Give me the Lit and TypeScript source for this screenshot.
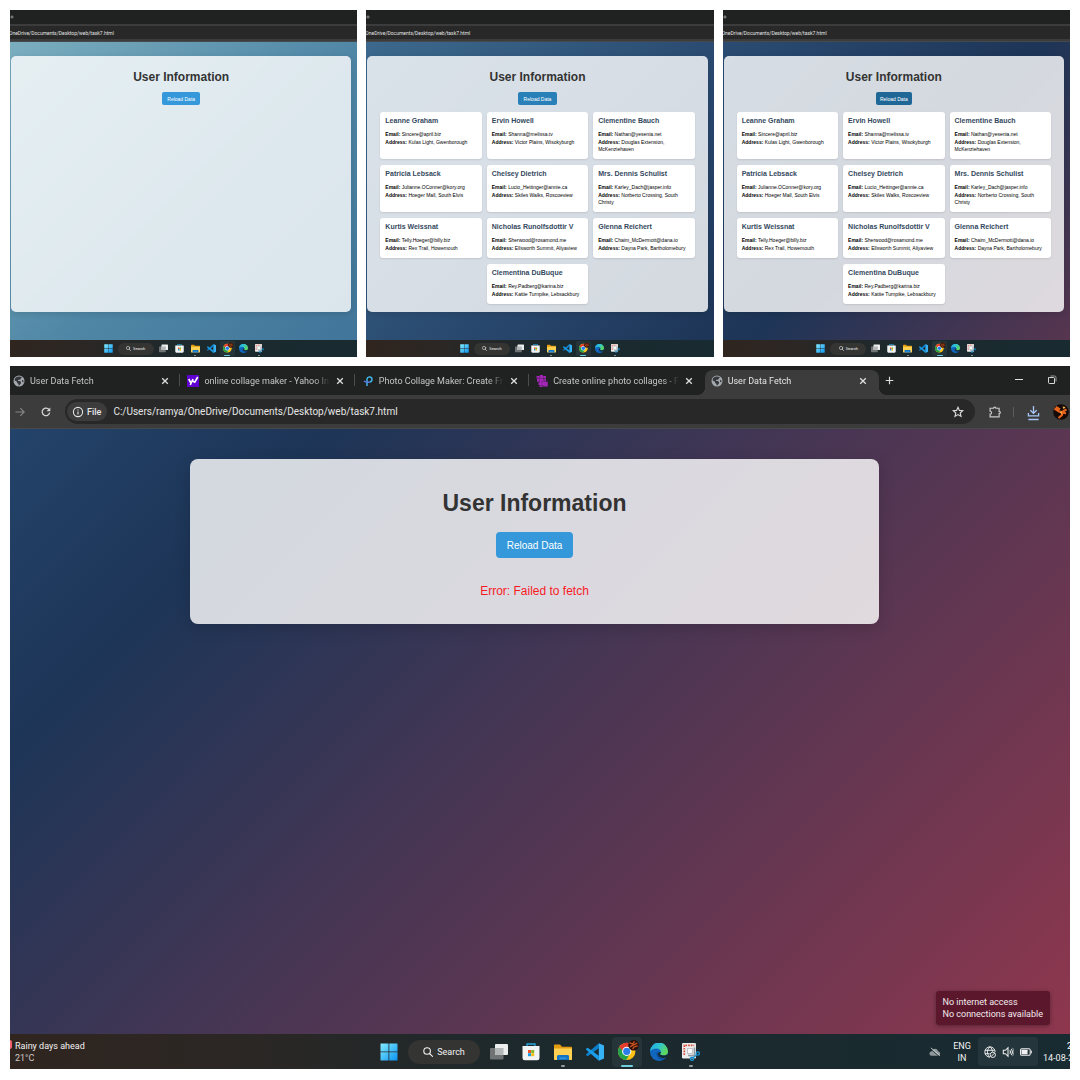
import { LitElement, html, css, svg, nothing } from "lit";
import { customElement, property } from "lit/decorators.js";
import { classMap } from "lit/directives/class-map.js";

interface User {
  name: string;
  email: string;
  address: string;
}

const USERS: User[] = [
  { name: "Leanne Graham", email: "Sincere@april.biz", address: "Kulas Light, Gwenborough" },
  { name: "Ervin Howell", email: "Shanna@melissa.tv", address: "Victor Plains, Wisokyburgh" },
  { name: "Clementine Bauch", email: "Nathan@yesenia.net", address: "Douglas Extension, McKenziehaven" },
  { name: "Patricia Lebsack", email: "Julianne.OConner@kory.org", address: "Hoeger Mall, South Elvis" },
  { name: "Chelsey Dietrich", email: "Lucio_Hettinger@annie.ca", address: "Skiles Walks, Roscoeview" },
  { name: "Mrs. Dennis Schulist", email: "Karley_Dach@jasper.info", address: "Norberto Crossing, South Christy" },
  { name: "Kurtis Weissnat", email: "Telly.Hoeger@billy.biz", address: "Rex Trail, Howemouth" },
  { name: "Nicholas Runolfsdottir V", email: "Sherwood@rosamond.me", address: "Ellsworth Summit, Aliyaview" },
  { name: "Glenna Reichert", email: "Chaim_McDermott@dana.io", address: "Dayna Park, Bartholomebury" },
  { name: "Clementina DuBuque", email: "Rey.Padberg@karina.biz", address: "Kattie Turnpike, Lebsackbury" },
];

/* ---------- icons ---------- */

const closeIcon = svg`<svg viewBox="0 0 10 10" fill="none" stroke="#dedede" stroke-width="1.3"><path d="M2.2 2.2l5.6 5.6M7.8 2.2L2.2 7.8"/></svg>`;

const globeIcon = svg`<svg viewBox="0 0 24 24"><circle cx="12" cy="12" r="11" fill="#a4a9ae"/><path fill="#35383a" d="M12 3c2.500 0 4.500.8 6 2.200L15.500 7l-1 2.500H11L9.500 12h4l2.500 2v2.500l-3 4-2 .5v-3l-3-2.500v-2L3 10.500A9 9 0 0 1 12 3zM18.500 9.500L21 11l-.4 4-2.600-1.500z"/></svg>`;

const yahooIcon = svg`<svg viewBox="0 0 24 24"><rect width="24" height="24" rx="1" fill="#5f01d1"/><path fill="none" stroke="#fff" stroke-width="3.200" d="M3.500 8l4 7.500M12 8L6.500 20M11.500 12l4 2.500L21.500 4"/></svg>`;

const ribbonIcon = svg`<svg viewBox="0 0 24 24" fill="none" stroke-width="3"><path stroke="#3fb2e6" d="M10 22V8a5 5 0 1 1 5 6"/><path stroke="#5b7be8" d="M4 12c3 2.500 8 2.800 11.500 2"/></svg>`;

const mosaicIcon = svg`<svg viewBox="0 0 24 24" fill="#a126b4"><path d="M1 2h6v5H1zM7.500 0H14v7.500H7.500zM14.500 2H20v5h-5.500zM2 7.500h5v6H2zM7.500 8H15v7H7.500zM15.500 8H20v5h-4.500zM5 14.500h9V20H5zM14 13.500h9.500V23H14zM7 20.500h6V24H7z"/><path fill="#5d1b6e" d="M16 10h2v2h-2zM3 5h2v2H3zM11 13h2v2h-2z"/></svg>`;

const windowsIcon = svg`<svg viewBox="0 0 18 18"><defs><linearGradient id="win" x1="0" y1="0" x2="1" y2="1"><stop offset="0" stop-color="#84ecff"/><stop offset="1" stop-color="#0a93f2"/></linearGradient></defs><path fill="url(#win)" d="M.8.5h7.700v8H.5V.8zM9.300.5H17l.5.3v7.700H9.300zM.5 9.300h8v8.200H.8l-.3-.3zM9.300 9.300h8.200v7.900l-.3.3H9.300z"/></svg>`;

const searchIcon = svg`<svg viewBox="0 0 10 10" fill="none" stroke="#f2f2f2" stroke-width="1.1" stroke-linecap="round"><circle cx="4.100" cy="4" r="3.300"/><path d="M6.500 6.500L9.500 9.400"/></svg>`;

const taskViewIcon = svg`<svg viewBox="0 0 18 18"><rect y="5" width="13.500" height="11.500" rx="1" fill="#6f7374"/><rect x="5" y="1" width="13" height="11" rx="1" fill="#eceded"/><path fill="#b4b7b8" d="M5 5h8.500v7H6l-1-1z"/></svg>`;

const storeIcon = svg`<svg viewBox="0 0 18 18"><path d="M5 4V1h8v3" fill="none" stroke="#27a7e0" stroke-width="1.300"/><path fill="#f1f3f5" d="M.5 3h17v12a2.300 2.300 0 0 1-2.300 2.300H2.800A2.300 2.300 0 0 1 .5 15z"/><path fill="#f2522b" d="M6 7h3v3H6z"/><path fill="#81b927" d="M9.200 7h3v3h-3z"/><path fill="#169fe6" d="M6 10.200h3v3H6z"/><path fill="#fbb90d" d="M9.200 10.200h3v3h-3z"/></svg>`;

const explorerIcon = svg`<svg viewBox="0 0 18 18"><path fill="#e39b12" d="M0 2.500c0-.6.400-1 1-1h5l2 2.200H17c.6 0 1 .4 1 1V8H0z"/><path fill="#ffd152" d="M0 5.500h18V16c0 .6-.4 1-1 1H1c-.6 0-1-.4-1-1z"/><path fill="#1474c4" d="M3 17v-3.500c0-1 .7-1.500 1.500-1.500h9c.8 0 1.500.5 1.500 1.500V17z"/><path fill="#3296dd" d="M5.500 14.500h7V16h-7z"/></svg>`;

const vscodeIcon = svg`<svg viewBox="0 0 18 18"><path fill="#0b7fcc" d="M12.800.2v5L1.700 13.300 0 12V11.300z"/><path fill="#1b9de9" d="M0 5.700l1.700-1L12.800 12.800v5L0 6.500z"/><path fill="#36b2f7" d="M12.800.2L18 2.600v12.800l-5.200 2.400z"/></svg>`;

const chromeIcon = svg`<svg viewBox="0 0 24 22"><circle cx="9.500" cy="12.500" r="9.500" fill="#fbc116"/><path fill="#e33b2e" d="M1.300 7.800A9.500 9.500 0 0 1 17.700 7.800H9.500L6 14z"/><path fill="#22a34a" d="M1.300 7.800a9.500 9.500 0 0 0 7.700 14.200L13.500 14l-7-.5z"/><circle cx="9.500" cy="12.500" r="5" fill="#fff"/><circle cx="9.500" cy="12.500" r="3.900" fill="#2b7de9"/><circle cx="17" cy="5.800" r="5.800" fill="#2a0f08"/><path fill="none" stroke="#c4521f" stroke-width="1.500" d="M12.500 3l3.500 1.500 2-3M13 7.500l3-1.500 5-2.500M16 10l1.500-2.500L21.500 6.500"/></svg>`;

const edgeIcon = svg`<svg viewBox="0 0 18 18"><defs><linearGradient id="edge" x1="0" y1="0" x2="1" y2=".5"><stop offset="0" stop-color="#1fa2e0"/><stop offset=".5" stop-color="#2fc5d3"/><stop offset="1" stop-color="#5fd95a"/></linearGradient></defs><circle cx="9" cy="9" r="9" fill="#1167bd"/><path fill="url(#edge)" d="M0 8.500A9 9 0 0 1 18 8.500c0 3-2.500 4-4.500 4-2.200 0-3.500-.7-3.500-1.400 0-.6.900-.9.900-2.300C10.900 7 9 5.500 6.500 5.500 3.500 5.500.8 7 0 8.500z"/><path fill="#0c4f9e" d="M6.500 9.500c-.8 3.500 2 7 5.500 7 1.800 0 3.300-.8 4.300-1.900-3.500 1.400-7.500.2-8.300-3.100-.2-1 .2-2.200.8-2.900z"/><path fill="#15282e" d="M10.900 9c0 1-.9 1.500-.9 2.100 0 .7 1.300 1.400 3.500 1.400 1.500 0 3-.5 3.800-1.500L17.300 13l-1 1.500c-3.800 1-7.800 0-8.300-3-.2-1.500.8-2.800 2.900-2.500z"/></svg>`;

const snipIcon = svg`<svg viewBox="0 0 18 18"><rect x="0" y="0" width="14" height="15.500" rx="1.300" fill="#eceded"/><path fill="none" stroke="#d84f3d" stroke-width="1.700" stroke-dasharray="1.700 1" d="M2.300 12V2.300h10"/><path fill="#bfc5c9" d="M5 5h6v6H5z"/><path fill="#fafafa" d="M6 6h4v4H6z"/><path stroke="#8f9aa2" stroke-width="1.600" d="M12.500 4.500v9M6 12.500h7"/><g fill="none" stroke="#168fd0" stroke-width="1.400"><circle cx="15.800" cy="10.500" r="1.600"/><circle cx="10" cy="15.800" r="1.600"/><path d="M14.500 12L11.300 14.700"/></g></svg>`;

const cloudIcon = svg`<svg viewBox="0 0 14 12"><path fill="#8d9699" d="M3 10.500a2.600 2.600 0 0 1-.2-5.200 4.200 4.200 0 0 1 8-.3 2.800 2.800 0 0 1 .2 5.500z"/><path stroke="#182a30" stroke-width="1" d="M1.200 2l11 9.500"/><path stroke="#d3d8da" stroke-width="1" d="M2 1l11 9.500"/></svg>`;

const networkIcon = svg`<svg viewBox="0 0 14 14" fill="none" stroke="#f1f1f1" stroke-width="1.100"><path d="M7 13A6 6 0 1 1 13 7M1 5h11.500M1 9h5.500M7 1C4.500 3 4 6 4 7s.5 4 2.500 6M7 1c1.800 1.400 2.700 3.500 2.900 5.500"/><circle cx="10.300" cy="10.300" r="3.100"/><path d="M8.200 12.400l4.200-4.200"/></svg>`;

const soundIcon = svg`<svg viewBox="0 0 14 14" fill="none" stroke="#f1f1f1" stroke-width="1.200"><path d="M1.500 5v4H4l3 3V2L4 5z"/><path d="M9 5c.9 1 .9 3 0 4M10.600 3.500c1.800 2 1.800 5 0 7" /><path stroke="#7f8b8f" d="M12.200 2.200c2 3 2 6.600 0 9.600"/></svg>`;

const batteryIcon = svg`<svg viewBox="0 0 14 14"><rect x=".6" y="3.200" width="11.300" height="7.600" rx="1.600" fill="none" stroke="#f1f1f1" stroke-width="1.200"/><rect x="1.800" y="4.400" width="7" height="5.200" rx=".6" fill="#f1f1f1"/><path fill="#f1f1f1" d="M12.700 5.300h.6c.7 0 .7 3.400 0 3.400h-.6z"/></svg>`;

const forwardIcon = svg`<svg viewBox="0 0 12 12" fill="none" stroke="#868686" stroke-width="1.200"><path d="M1.500 6h8.500M6.300 2.200L10.100 6l-3.800 3.800"/></svg>`;

const reloadIcon = svg`<svg viewBox="0 0 12 12" fill="none" stroke="#d4d4d4" stroke-width="1.300"><path d="M9.300 4A3.800 3.800 0 1 0 9.700 6.700"/><path fill="#d4d4d4" stroke="none" d="M10.300 1.500v3.800H6.500z"/></svg>`;

const infoIcon = svg`<svg viewBox="0 0 12 12" fill="none" stroke="#e4e4e4" stroke-width="1.100"><circle cx="6" cy="6" r="4.600"/><path d="M6 5.400v3M6 3.400v1.100"/></svg>`;

const starIcon = svg`<svg viewBox="0 0 12 12" fill="none" stroke="#dcdcdc" stroke-width="1.100"><path d="M6 1.300l1.400 3.100 3.400.3-2.600 2.300.8 3.400L6 8.600l-3 1.800.8-3.400L1.200 4.700l3.400-.3z"/></svg>`;

const puzzleIcon = svg`<svg viewBox="0 0 14 14" fill="none" stroke="#c9c9c9" stroke-width="1.400"><path d="M1.300 2.600h4a1.400 1.400 0 0 1 2.800 0h3.700v3.600a1.400 1.400 0 0 1 0 2.800v3.700H1.300V9.500a1.700 1.700 0 0 0 0-3.400z"/></svg>`;

const downloadIcon = svg`<svg viewBox="0 0 14 16" fill="none" stroke="#a8c7fa" stroke-width="1.400"><path d="M7 .5v7.500M3.600 5L7 8.400 10.400 5M1.500 8v3.200h11V8"/><path stroke-width="1.600" d="M1.500 15h11"/></svg>`;

const avatarIcon = svg`<svg viewBox="0 0 16 16"><circle cx="8" cy="8" r="7.800" fill="#160a08"/><path fill="none" stroke="#e8641c" stroke-width="2.200" d="M1.500 4.500L6 7.500l3 .5 4.500-2.500M9 8v3l-3.500 3M9 8l4 1.500M3 3l4 2.500"/><path fill="#ffc04a" d="M9.500 2.500l3 .5-1.800 2.200zM7 8l2-.6-.6 3z"/></svg>`;

const minimizeIcon = svg`<svg viewBox="0 0 10 10"><path stroke="#e0e0e0" d="M1 4.500h8"/></svg>`;

const restoreIcon = svg`<svg viewBox="0 0 10 10" fill="none" stroke="#d6d6d6"><path d="M1.500 2.500h5a1 1 0 0 1 1 1v5h-5a1 1 0 0 1-1-1z"/><path stroke="#9a9a9a" d="M3.500 1h4a1.500 1.500 0 0 1 1.500 1.500v4"/></svg>`;

const plusIcon = svg`<svg viewBox="0 0 10 10" stroke="#dcdcdc" stroke-width="1.300"><path d="M5 .8v8.400M.8 5h8.400"/></svg>`;

/* ---------- web page shown inside a browser window ---------- */

@customElement("user-info-page")
export class UserInfoPage extends LitElement {
  @property({ attribute: false }) users: User[] = [];
  @property() error = "";
  @property() tone = "teal";
  @property({ type: Boolean, reflect: true }) wide = false;

  static styles = css`
    :host {
      display: flex;
      min-height: 0;
    }
    .page {
      flex: 1;
      display: flex;
      padding: 14px 6px 28px 1px;
      box-sizing: border-box;
      font-family: "Liberation Sans", Arial, sans-serif;
    }
    .teal { background: linear-gradient(135deg, #7aaebf, #4f86a5 55%, #41759a); }
    .steel { background: linear-gradient(135deg, #3c698d, #29486e 60%, #1d3557); }
    .navy { background: linear-gradient(135deg, #2b4c72, #1d3557 50%, #57354f); }
    .dusk { background: linear-gradient(135deg, #24436a, #1d3557 19%, #8e374e); }
    .card {
      flex: 1;
      box-sizing: border-box;
      padding: 14px 13px 8px;
      border-radius: 5px;
      background: rgba(255, 255, 255, 0.81);
      box-shadow: 0 2px 6px rgba(0, 0, 0, 0.12);
      text-align: center;
    }
    h1 {
      margin: 0;
      font-size: 12px;
      line-height: 14px;
      color: #333;
    }
    .reload {
      display: block;
      margin: 8px auto 7px;
      height: 13px;
      padding: 0 5px;
      border: 0;
      border-radius: 2px;
      background: #3498db;
      color: #fff;
      font: 5px "Liberation Sans", Arial, sans-serif;
    }
    .steel .reload {
      background: #2980b9;
      padding: 0 6px;
    }
    .navy .reload {
      background: #1f6797;
      padding: 0 4px;
    }
    .users {
      display: grid;
      grid-template-columns: repeat(3, 1fr);
      gap: 6px 5px;
      margin: 0;
      padding: 0;
      list-style: none;
      text-align: left;
    }
    .user {
      padding: 5px 5px 6px;
      border-radius: 3px;
      background: #fff;
      box-shadow: 0 1px 2px rgba(0, 0, 0, 0.1);
      font-size: 5px;
      line-height: 7px;
      color: #000;
    }
    .user:last-child:nth-child(3n + 1) {
      grid-column: 2;
    }
    h2 {
      margin: 0 0 6px;
      font-size: 7px;
      line-height: 8px;
      color: #34495e;
      white-space: nowrap;
    }
    .user p {
      margin: 0;
    }
    .user p + p {
      margin-top: 1px;
    }
    :host([wide]) .page {
      align-items: flex-start;
      justify-content: center;
      padding: 30px 0;
    }
    :host([wide]) .card {
      flex: 0 0 auto;
      width: 65%;
      min-width: 300px;
      margin-right: 11px;
      padding: 30px 24px 25px;
      border-radius: 8px;
      box-shadow: 0 4px 16px rgba(0, 0, 0, 0.16);
    }
    :host([wide]) h1 {
      font-size: 23px;
      line-height: 28px;
    }
    :host([wide]) .reload {
      margin: 15px auto 25px;
      height: 26px;
      padding: 0 11px;
      border-radius: 4px;
      font-size: 10px;
    }
    .error {
      margin: 0;
      font-size: 12px;
      line-height: 16px;
      color: #f81a1f;
    }
  `;

  render() {
    return html`
      <main class="page ${this.tone}">
        <section class="card">
          <h1>User Information</h1>
          <button class="reload" type="button">Reload Data</button>
          ${this.users.length
            ? html`<ul class="users">
                ${this.users.map(
                  (u) => html`<li class="user">
                    <h2>${u.name}</h2>
                    <p><b>Email:</b> ${u.email}</p>
                    <p><b>Address:</b> ${u.address}</p>
                  </li>`
                )}
              </ul>`
            : nothing}
          ${this.error ? html`<p class="error" role="alert">${this.error}</p>` : nothing}
        </section>
      </main>
    `;
  }
}

/* ---------- desktop taskbar ---------- */

@customElement("desktop-taskbar")
export class DesktopTaskbar extends LitElement {
  @property({ type: Boolean, reflect: true }) large = false;

  static styles = css`
    :host {
      --u: 1px;
      display: block;
      font-family: Roboto, "Open Sans", sans-serif;
      color: #f3f3f3;
    }
    :host([large]) {
      --u: 2px;
    }
    .bar {
      display: grid;
      grid-template-columns: minmax(0, 1fr) auto minmax(0, 1fr);
      height: 17px;
      background: linear-gradient(90deg, #30251f, #2b2725 22%, #1c292d 50%, #182b31);
    }
    :host([large]) .bar {
      height: 35px;
    }
    button {
      border: 0;
      padding: 0;
      background: none;
      color: inherit;
      font: inherit;
    }
    svg {
      display: block;
      width: 100%;
      height: 100%;
    }
    .apps {
      display: flex;
      align-items: center;
      gap: calc(var(--u) * 7);
    }
    .app {
      flex: none;
      position: relative;
      width: calc(var(--u) * 9);
      height: calc(var(--u) * 9);
    }
    .start,
    .search {
      margin-right: calc(var(--u) * -2);
    }
    .search {
      display: flex;
      align-items: center;
      justify-content: center;
      gap: calc(var(--u) * 2);
      width: calc(var(--u) * 36);
      height: calc(var(--u) * 12);
      border-radius: calc(var(--u) * 6);
      background: #343433;
      font-size: 4px;
    }
    :host([large]) .search {
      font-size: 9px;
    }
    .lens {
      width: calc(var(--u) * 5);
      height: calc(var(--u) * 5);
    }
    .active {
      width: calc(var(--u) * 15);
      height: calc(var(--u) * 15);
      margin: 0 calc(var(--u) * -3);
      padding: var(--u) var(--u) calc(var(--u) * 3) calc(var(--u) * 3);
      box-sizing: border-box;
      border-radius: calc(var(--u) * 2);
      background: #26353a;
    }
    .running::after,
    .active::after {
      content: "";
      position: absolute;
      left: 50%;
      bottom: calc(var(--u) * -3);
      width: calc(var(--u) * 2);
      height: var(--u);
      margin-left: calc(var(--u) * -1);
      border-radius: var(--u);
      background: #969c9e;
    }
    .active::after {
      bottom: 0;
      width: calc(var(--u) * 6);
      margin-left: calc(var(--u) * -3);
      background: #6fcfdf;
    }
    .weather {
      display: flex;
      align-items: center;
      gap: 3px;
      font-size: 9px;
      line-height: 12px;
      white-space: nowrap;
    }
    .badge {
      width: 2px;
      height: 9px;
      margin-bottom: 14px;
      border-radius: 0 4px 4px 0;
      background: #f4606c;
    }
    .weather .temp {
      color: #cfcac8;
    }
    .tray {
      display: flex;
      align-items: center;
      justify-content: flex-end;
      overflow: hidden;
      font-size: 9px;
      line-height: 12px;
    }
    .sync {
      width: 12px;
      height: 10px;
    }
    .lang {
      width: 18px;
      margin: 0 7px 0 12px;
      text-align: center;
    }
    .quick {
      display: flex;
      align-items: center;
      gap: 6px;
      height: 29px;
      padding: 0 6px;
      border-radius: 4px;
      background: #24363c;
    }
    .quick span {
      width: 12px;
      height: 12px;
    }
    .clock {
      width: 27px;
      margin-left: 5px;
      white-space: nowrap;
    }
    .time {
      padding-left: 24px;
    }
  `;

  private app(label: string, icon: unknown, state = "") {
    return html`<button type="button" class="app ${state}" aria-label=${label}>${icon}</button>`;
  }

  render() {
    return html`
      <footer class="bar">
        ${this.large
          ? html`<div class="weather">
              <span class="badge"></span>
              <div><div>Rainy days ahead</div><div class="temp">21°C</div></div>
            </div>`
          : html`<div></div>`}
        <nav class="apps">
          ${this.app("Start", windowsIcon, "start")}
          <button type="button" class="search"><span class="lens">${searchIcon}</span>Search</button>
          ${this.app("Task view", taskViewIcon)} ${this.app("Store", storeIcon)}
          ${this.app("File Explorer", explorerIcon, "running")}
          ${this.app("Code editor", vscodeIcon)} ${this.app("Browser", chromeIcon, "active")}
          ${this.app("Edge", edgeIcon)} ${this.app("Snipping tool", snipIcon, "running")}
        </nav>
        ${this.large
          ? html`<div class="tray">
              <span class="sync">${cloudIcon}</span>
              <div class="lang"><div>ENG</div><div>IN</div></div>
              <button type="button" class="quick" aria-label="Quick settings">
                <span>${networkIcon}</span><span>${soundIcon}</span><span>${batteryIcon}</span>
              </button>
              <div class="clock"><div class="time">2</div><div>14-08-2</div></div>
            </div>`
          : nothing}
      </footer>
    `;
  }
}

/* ---------- collage ---------- */

const TABS = [
  { title: "User Data Fetch", icon: globeIcon },
  { title: "online collage maker - Yahoo In", icon: yahooIcon },
  { title: "Photo Collage Maker: Create Fr", icon: ribbonIcon },
  { title: "Create online photo collages - F", icon: mosaicIcon },
  { title: "User Data Fetch", icon: globeIcon, active: true },
];

@customElement("app-root")
export class AppRoot extends LitElement {
  static styles = css`
    :host {
      display: block;
      background: #fff;
      font-family: Roboto, "Open Sans", sans-serif;
    }
    .collage {
      display: grid;
      grid-template-columns: repeat(3, minmax(0, 1fr));
      grid-template-rows: auto 1fr;
      gap: 9px;
      min-height: 100vh;
      box-sizing: border-box;
      padding: 10px 10px 11px;
    }
    .shot {
      display: flex;
      flex-direction: column;
      overflow: hidden;
    }
    .full {
      grid-column: 1 / -1;
    }
    user-info-page {
      flex: 1;
    }
    button,
    input {
      border: 0;
      padding: 0;
      margin: 0;
      background: none;
      color: inherit;
      font: inherit;
      outline: 0;
    }
    svg {
      display: block;
      width: 100%;
      height: 100%;
    }
    .mini-strip {
      display: flex;
      align-items: center;
      height: 14px;
      background: #1f2221;
    }
    .mini-plus {
      width: 4px;
      height: 4px;
    }
    .mini-bar {
      display: flex;
      padding: 2px 0;
      border-bottom: 1px solid #46494b;
      background: #3c3c3c;
    }
    .mini-url {
      flex: 1;
      min-width: 0;
      height: 13px;
      background: #282828;
      color: #e2e2e2;
      font-size: 5px;
      text-indent: -1px;
    }
    .strip {
      display: flex;
      align-items: flex-end;
      height: 29px;
      background: #1f2221;
      color: #c4c7c5;
      font-size: 9px;
    }
    .tabs {
      display: flex;
      flex: 0 1 872px;
      min-width: 0;
      margin-left: -3px;
    }
    .tab {
      position: relative;
      flex: 1 1 0;
      min-width: 0;
      display: flex;
      align-items: center;
      gap: 5px;
      height: 25px;
      padding: 0 11px 0 6px;
      box-sizing: border-box;
    }
    .tab + .tab:not(.current)::before {
      content: "";
      position: absolute;
      left: -2px;
      top: 4px;
      width: 1px;
      height: 12px;
      background: #4a4d4c;
    }
    .favicon {
      flex: none;
      width: 12px;
      height: 12px;
      margin-bottom: 4px;
    }
    .title {
      flex: 1;
      min-width: 0;
      margin-bottom: 4px;
      overflow: hidden;
      white-space: nowrap;
      text-align: left;
      line-height: 14px;
      mask-image: linear-gradient(90deg, #000 calc(100% - 16px), transparent);
    }
    .close {
      flex: none;
      width: 10px;
      height: 10px;
      margin-bottom: 4px;
    }
    .current {
      border-radius: 8px 8px 0 0;
      background: #3c3c3c;
      color: #e3e3e3;
    }
    .current::before,
    .current::after {
      content: "";
      position: absolute;
      bottom: 0;
      width: 8px;
      height: 8px;
    }
    .current::before {
      right: 100%;
      background: radial-gradient(circle at 0 0, transparent 8px, #3c3c3c 8px);
    }
    .current::after {
      left: 100%;
      background: radial-gradient(circle at 100% 0, transparent 8px, #3c3c3c 8px);
    }
    .new-tab {
      width: 9px;
      height: 9px;
      margin: 0 auto 10px 6px;
    }
    .window-control {
      width: 10px;
      height: 10px;
      margin: 0 13px 10px 10px;
    }
    .toolbar {
      display: flex;
      align-items: center;
      height: 34px;
      box-sizing: border-box;
      border-bottom: 1px solid #46494b;
      background: #3c3c3c;
      color: #e6e6e6;
    }
    .tool {
      flex: none;
      width: 12px;
      height: 12px;
    }
    .forward {
      margin: 0 14px 0 4px;
    }
    .omnibox {
      flex: 1;
      min-width: 0;
      display: flex;
      align-items: center;
      height: 25px;
      margin: 0 14px 0 13px;
      padding: 0 11px 0 2px;
      border-radius: 13px;
      background: #282828;
    }
    .chip {
      flex: none;
      display: flex;
      align-items: center;
      gap: 3px;
      height: 19px;
      padding: 0 6px 0 5px;
      border-radius: 10px;
      background: #3c3c3c;
      font-size: 9px;
      font-weight: 500;
    }
    .url {
      flex: 1;
      min-width: 0;
      margin: 0 6px;
      font-size: 10px;
    }
    .divider {
      width: 1px;
      height: 10px;
      margin: 0 13px 0 12px;
      background: #5c5c5c;
    }
    .download {
      width: 13px;
      height: 16px;
      margin-top: 3px;
    }
    .avatar {
      flex: none;
      width: 16px;
      height: 16px;
      margin: 0 1px 0 13px;
    }
    .body {
      position: relative;
      flex: 1;
      display: flex;
    }
    .toast {
      position: absolute;
      right: 20px;
      bottom: 9px;
      padding: 5px 7px;
      border-radius: 3px;
      background: #5b182c;
      box-shadow: 0 1px 4px rgba(0, 0, 0, 0.35);
      color: #f3e9ec;
      font-size: 9px;
      line-height: 12px;
    }
  `;

  private miniShot(tone: string, users: User[]) {
    return html`<article class="shot">
      <div class="mini-strip">
        <button type="button" class="mini-plus" aria-label="New tab">${plusIcon}</button>
      </div>
      <div class="mini-bar">
        <input class="mini-url" aria-label="Address" .value=${"OneDrive/Documents/Desktop/web/task7.html"} />
      </div>
      <user-info-page tone=${tone} .users=${users}></user-info-page>
      <desktop-taskbar></desktop-taskbar>
    </article>`;
  }

  render() {
    return html`
      <div class="collage">
        ${this.miniShot("teal", [])} ${this.miniShot("steel", USERS)} ${this.miniShot("navy", USERS)}
        <article class="shot full">
          <div class="strip">
            <div class="tabs">
              ${TABS.map(
                (t) => html`<div class=${classMap({ tab: true, current: !!t.active })}>
                  <span class="favicon">${t.icon}</span>
                  <button type="button" class="title">${t.title}</button>
                  <button type="button" class="close" aria-label="Close tab">${closeIcon}</button>
                </div>`
              )}
            </div>
            <button type="button" class="new-tab" aria-label="New tab">${plusIcon}</button>
            <button type="button" class="window-control" aria-label="Minimize">${minimizeIcon}</button>
            <button type="button" class="window-control" aria-label="Restore">${restoreIcon}</button>
          </div>
          <div class="toolbar">
            <button type="button" class="tool forward" aria-label="Forward">${forwardIcon}</button>
            <button type="button" class="tool" aria-label="Reload">${reloadIcon}</button>
            <div class="omnibox">
              <button type="button" class="chip"><span class="tool">${infoIcon}</span>File</button>
              <input
                class="url"
                aria-label="Address"
                .value=${"C:/Users/ramya/OneDrive/Documents/Desktop/web/task7.html"}
              />
              <button type="button" class="tool" aria-label="Bookmark">${starIcon}</button>
            </div>
            <button type="button" class="tool" aria-label="Extensions">${puzzleIcon}</button>
            <span class="divider"></span>
            <button type="button" class="download" aria-label="Downloads">${downloadIcon}</button>
            <button type="button" class="avatar" aria-label="Profile">${avatarIcon}</button>
          </div>
          <div class="body">
            <user-info-page wide tone="dusk" error="Error: Failed to fetch"></user-info-page>
            <div class="toast" role="status">
              <div>No internet access</div>
              <div>No connections available</div>
            </div>
          </div>
          <desktop-taskbar large></desktop-taskbar>
        </article>
      </div>
    `;
  }
}
